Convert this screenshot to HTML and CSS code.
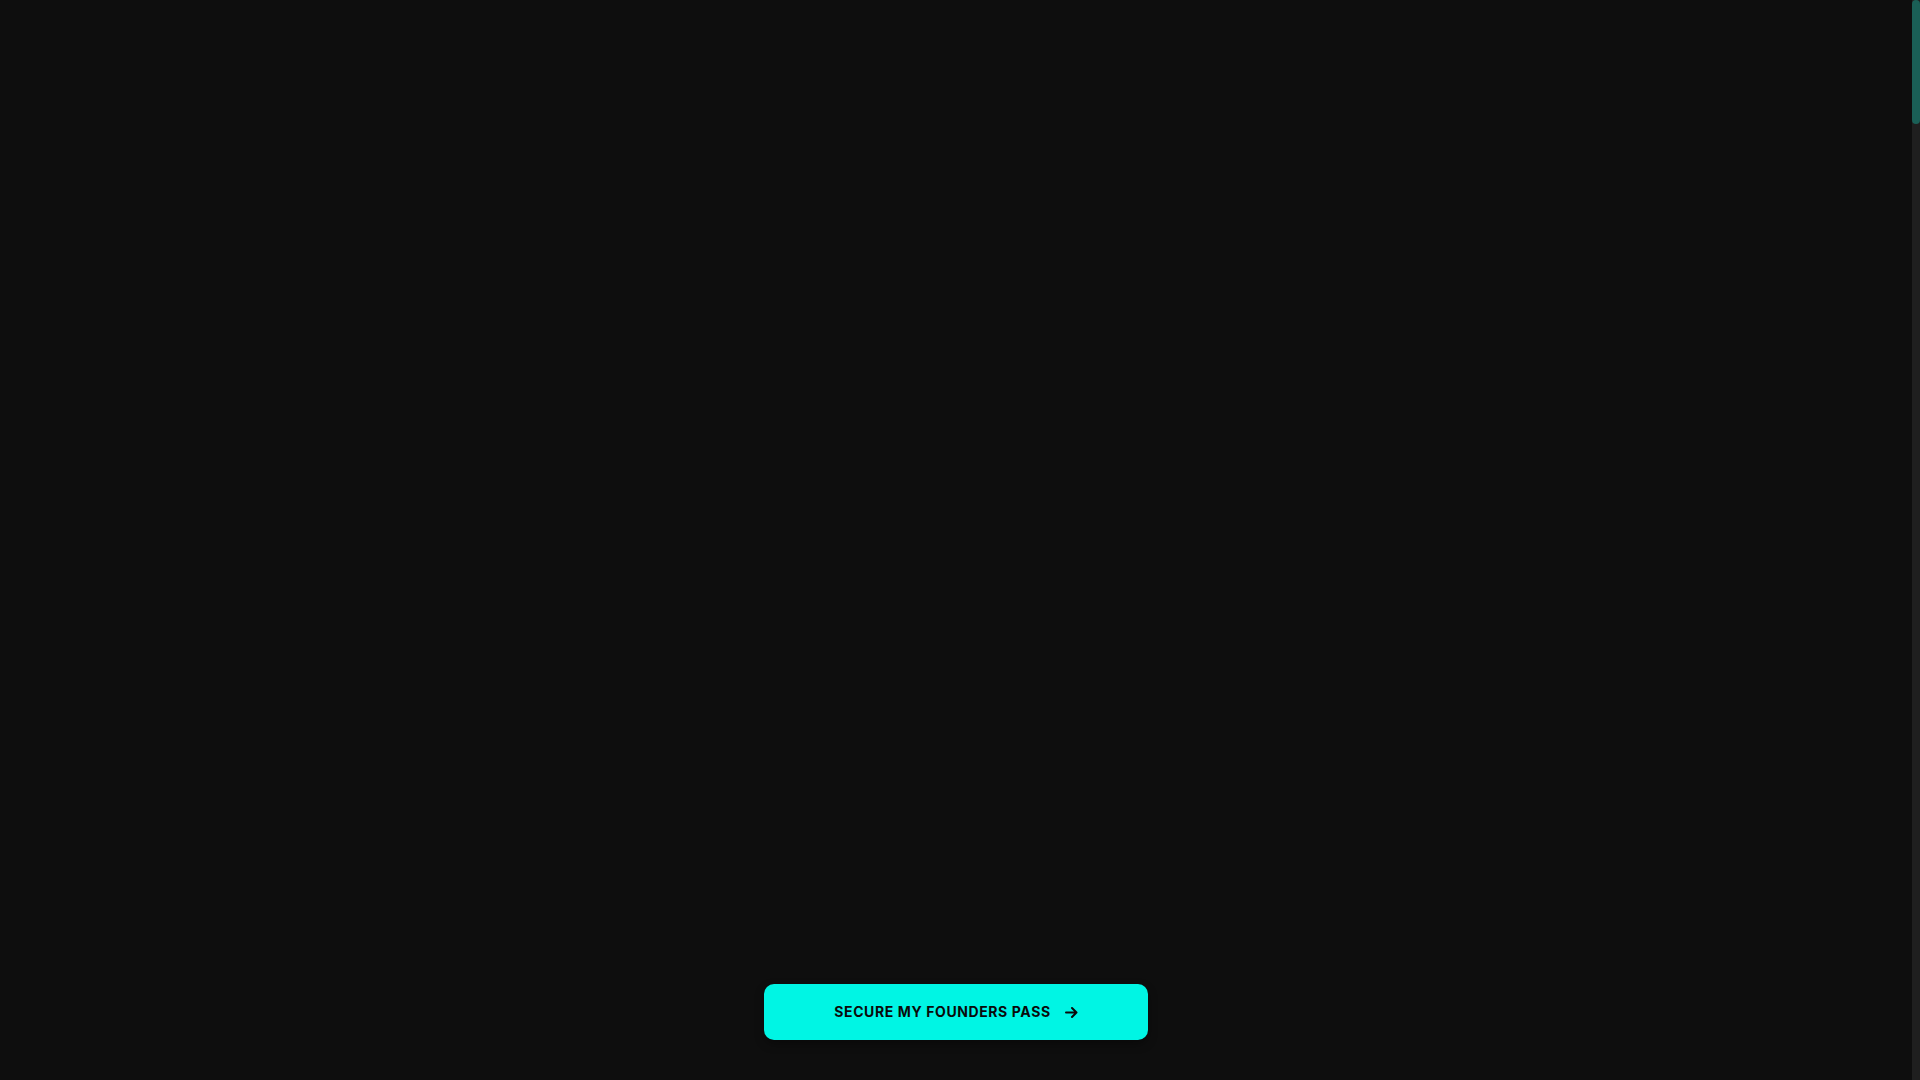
FILE: index.html
```html
<!DOCTYPE html>
<html lang="en">
<head>
<meta charset="utf-8">
<title>Founders Pass</title>
<link rel="stylesheet" href="styles.css">
</head>
<body>
<div class="frame">
  <main class="page">
    <section class="hero">
      <a class="cta" href="#">
        <span class="cta-label">SECURE MY FOUNDERS PASS</span>
        <svg class="cta-arrow" viewBox="0 0 13 13" width="13" height="13" aria-hidden="true">
          <path d="M1 6.5H11.5M7 2L11.5 6.5L7 11" fill="none" stroke="currentColor" stroke-width="2" stroke-linecap="round" stroke-linejoin="round"/>
        </svg>
      </a>
    </section>
  </main>
  <div class="scrollbar">
    <div class="scrollbar-thumb"></div>
  </div>
</div>
</body>
</html>
```
FILE: styles.css
```css
html, body {
  margin: 0;
  height: 100%;
  overflow: hidden;
  background: #0e0e0e;
}
body {
  font-family: Inter, "Liberation Sans", sans-serif;
}
.frame {
  height: 1080px;
  display: grid;
  grid-template-columns: 1fr 8px;
}
.page {
  display: flex;
  flex-direction: column;
  min-width: 0;
}
.hero {
  height: 1080px;
  display: flex;
  flex-direction: column;
  align-items: center;
  justify-content: flex-end;
  padding-bottom: 40px;
  box-sizing: border-box;
}
.cta {
  width: 384px;
  height: 56px;
  box-sizing: border-box;
  display: flex;
  align-items: center;
  justify-content: center;
  gap: 14px;
  background: #00f5e4;
  color: #0a0a0a;
  border-radius: 10px;
  text-decoration: none;
  box-shadow: 0 4px 10px rgba(0, 0, 0, 0.35);
}
.cta-label {
  font-size: 14px;
  font-weight: 700;
  letter-spacing: 0.6px;
  line-height: 1;
}
.cta-arrow {
  display: block;
}
.scrollbar {
  background: #1f1f1f;
  display: flex;
  flex-direction: column;
}
.scrollbar-thumb {
  height: 124px;
  background: #1a5f56;
  border-radius: 4px;
}
```
